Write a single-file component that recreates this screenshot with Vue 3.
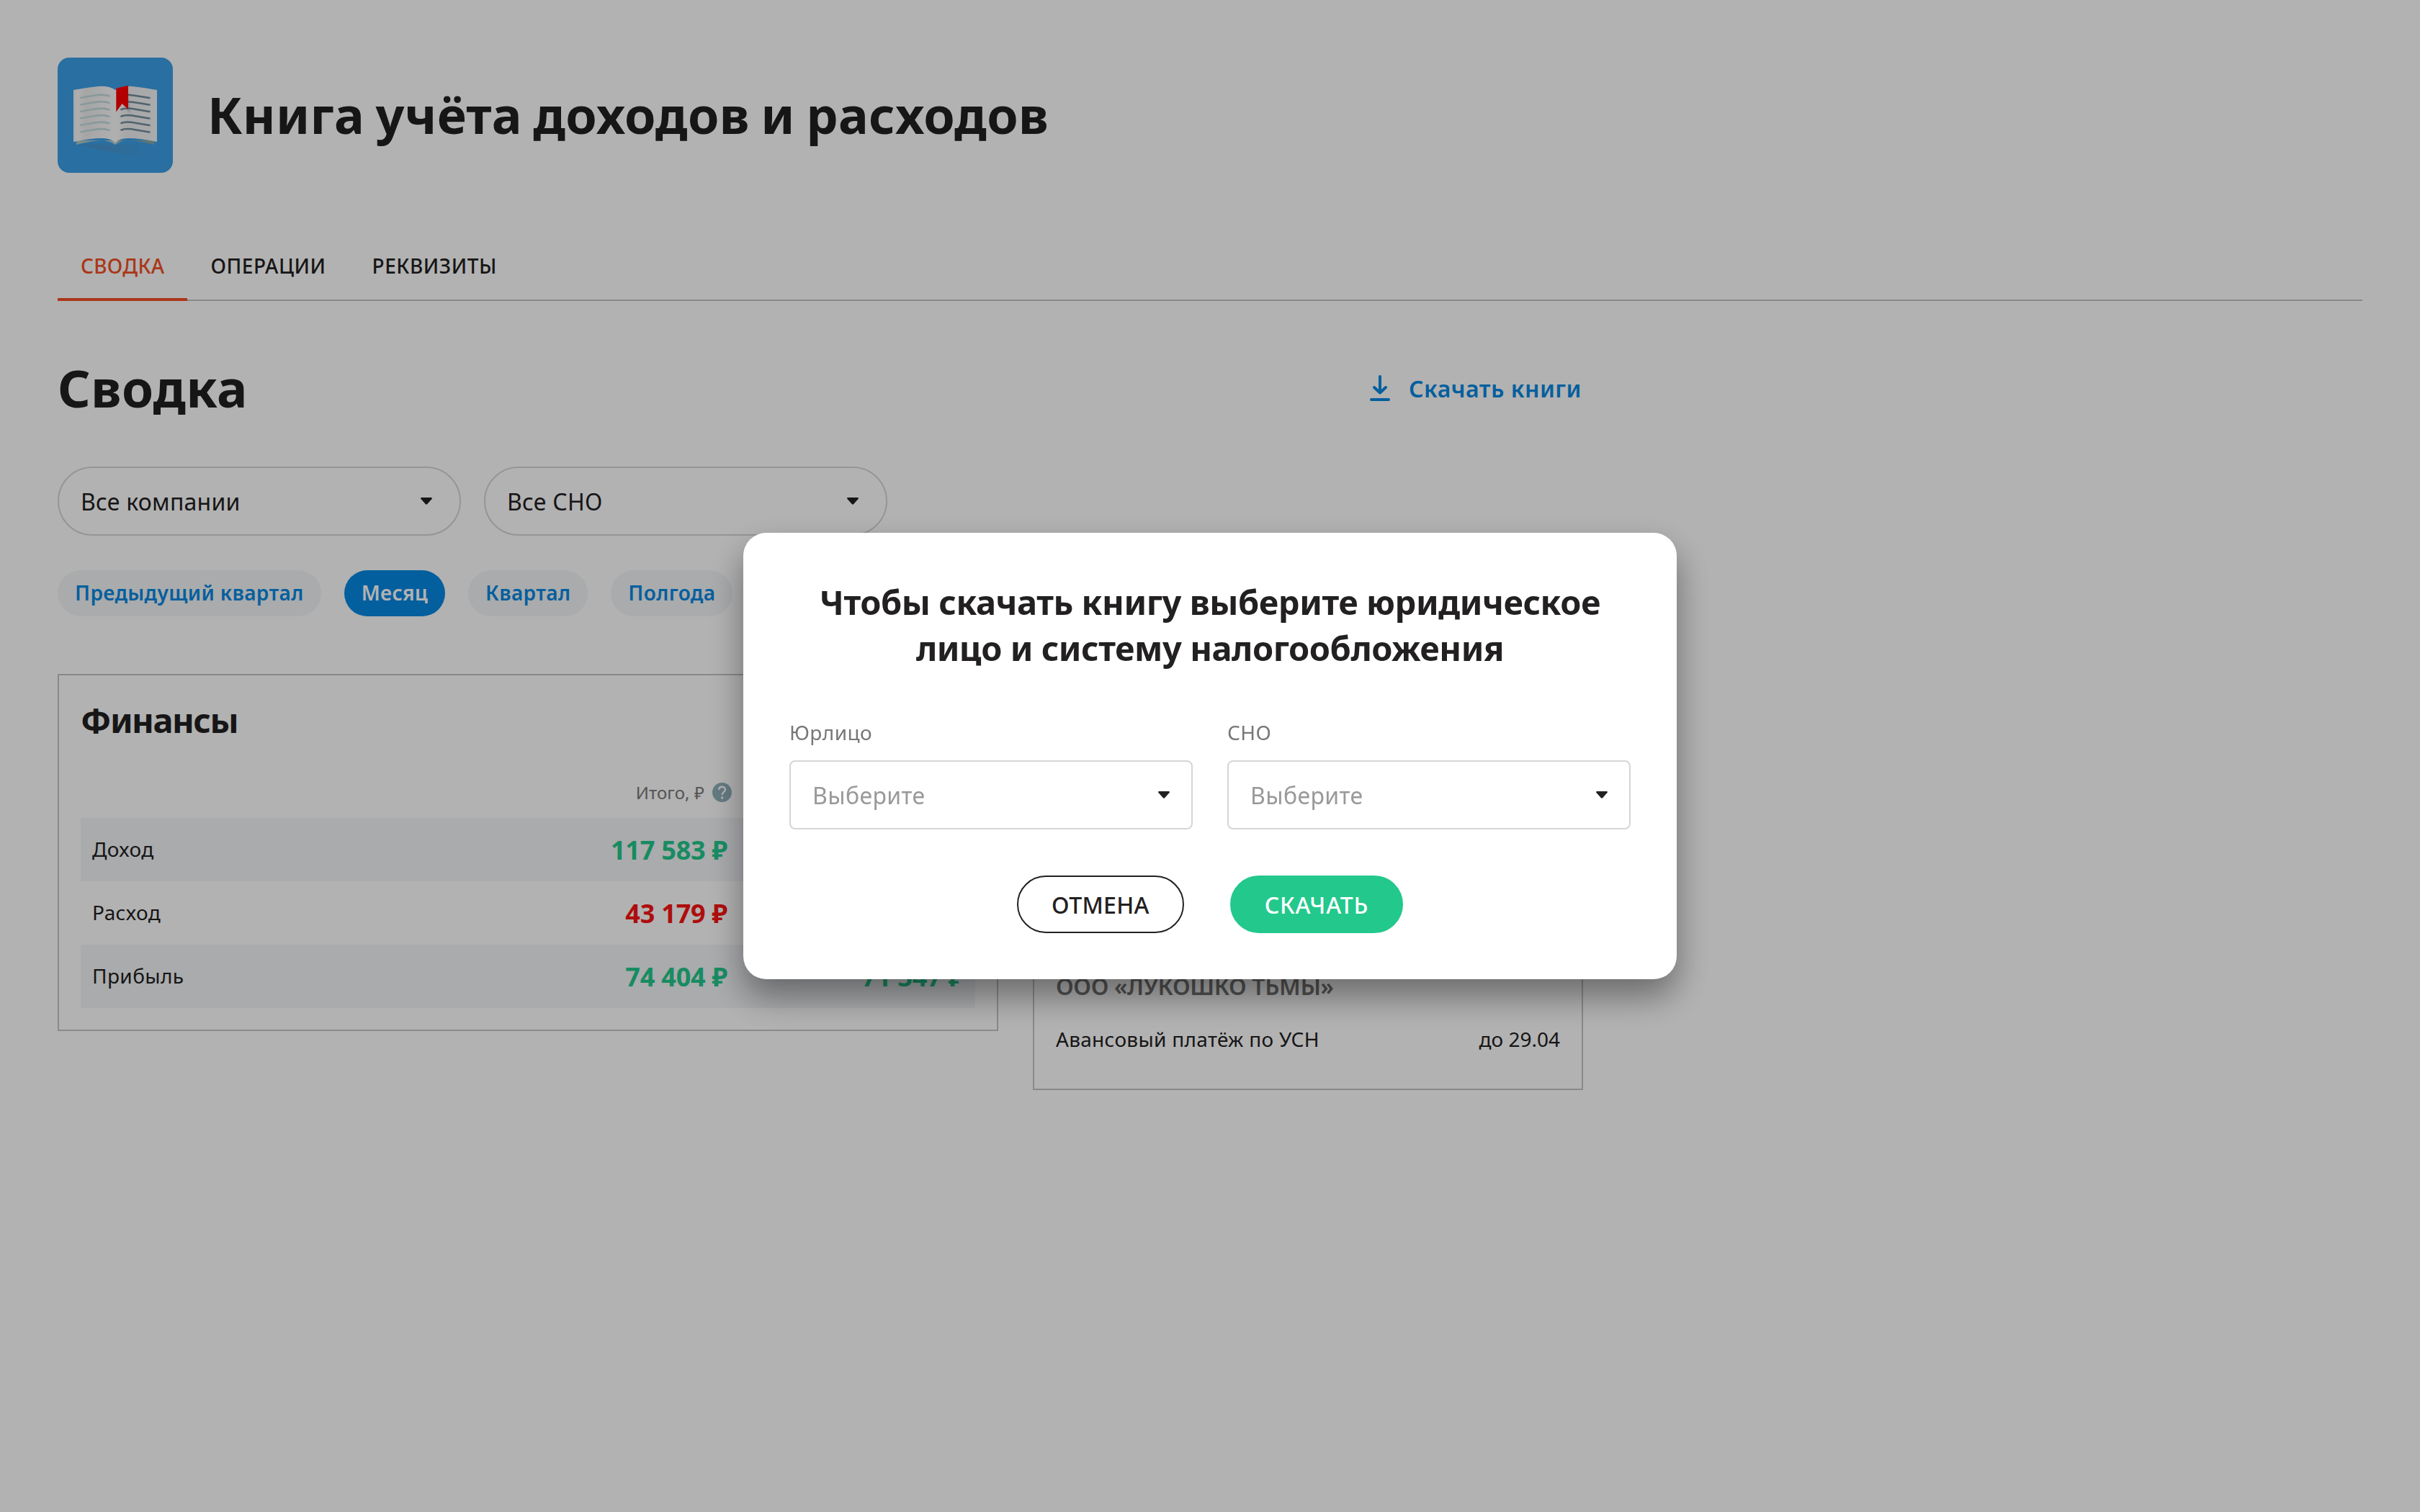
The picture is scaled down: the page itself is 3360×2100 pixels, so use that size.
<template>
  <div class="page">
    <header class="head">
      <svg class="logo" viewBox="0 0 160 160">
        <defs>
          <linearGradient id="shade" x1="0" y1="0" x2="1" y2="0">
            <stop offset="0" stop-color="#4e93c9" />
            <stop offset="1" stop-color="#3ca0e8" />
          </linearGradient>
          <linearGradient id="pageLeft" x1="0" y1="0" x2="1" y2="0">
            <stop offset="0" stop-color="#f1f1f1" />
            <stop offset="0.1" stop-color="#fafafa" />
            <stop offset="0.3" stop-color="#ededed" />
            <stop offset="1" stop-color="#fcfcfc" />
          </linearGradient>
          <linearGradient id="pageRight" x1="0" y1="0" x2="1" y2="0">
            <stop offset="0" stop-color="#fcfcfc" />
            <stop offset="0.3" stop-color="#eeeff1" />
            <stop offset="1" stop-color="#f4f5f6" />
          </linearGradient>
          <linearGradient id="base" x1="0" y1="0" x2="1" y2="0">
            <stop offset="0" stop-color="#a9c8c6" />
            <stop offset="0.5" stop-color="#b9cfce" />
            <stop offset="0.6" stop-color="#8aa9ab" />
            <stop offset="1" stop-color="#86a7a9" />
          </linearGradient>
        </defs>
        <rect width="160" height="160" rx="16" fill="#3ca0e8" />
        <path d="M28 121 L134 121 L124 138 Q112 138 100 136 Z" fill="url(#shade)" />
        <path d="M26 115 H134 V121 Q112 115 97 115 Q87 116 80 121 Q73 116 63 115 Q48 115 26 121 Z" fill="url(#base)" />
        <path d="M22 45 Q38 42 50 40.7 Q70 37.5 80 45 V118.500 Q75 112 62 112 Q50 111.500 22 117 Z" fill="url(#pageLeft)" />
        <path d="M138 45 Q122 42 110 40.700 Q90 37.500 80 45 V118.500 Q85 112 98 112 Q110 111.500 138 117 Z" fill="url(#pageRight)" />
        <path d="M98 47 L101.800 77.500 L95 73.500 L98 71 Z" fill="#d3dadd" />
        <g fill="none" stroke-width="2.600" stroke-linecap="round">
          <path v-for="n in 6" :key="'l' + n" :d="leftLine(n - 1)" stroke="#c4dcdd" />
          <path v-for="n in 6" :key="'r' + n" :d="rightLine(n - 1)" stroke="#728f9d" />
        </g>
        <path d="M81.300 43 Q88 40.500 98 39 V72 L89.500 64 L81.300 75.500 Z" fill="#ff0000" />
      </svg>
      <h1>Книга учёта доходов и расходов</h1>
    </header>

    <nav class="tabs">
      <a v-for="tab in tabs" :key="tab" :class="['tab', { active: tab === activeTab }]">{{ tab }}</a>
    </nav>

    <main class="content">
      <div class="title-row">
        <h2>Сводка</h2>
        <a class="download">
          <svg width="28" height="36" viewBox="0 0 28 36" fill="none" stroke="#0788e3" stroke-width="4" stroke-linecap="round" stroke-linejoin="round">
            <path d="M14 2V24M6 17L14 24.500L22 17M2 34H26" />
          </svg>
          <span>Скачать книги</span>
        </a>
      </div>

      <div class="filters">
        <div v-for="item in filters" :key="item" class="select round">
          <span>{{ item }}</span>
          <svg class="arrow" viewBox="0 0 16 10"><path d="M1.500 0H14.500Q17 .4 15.300 2.300L9.300 9Q8 10.300 6.700 9L.7 2.300Q-1 .4 1.500 0Z" /></svg>
        </div>
      </div>

      <div class="chips">
        <span v-for="p in periods" :key="p" :class="['chip', { selected: p === activePeriod }]">{{ p }}</span>
      </div>

      <div class="cards">
        <section class="card finance">
          <h3>Финансы</h3>
          <div class="row row-head">
            <span></span>
            <span class="total">
              Итого, ₽
              <svg width="27" height="27" viewBox="0 0 27 27">
                <circle cx="13.500" cy="13.500" r="13.500" fill="#90b0ba" />
                <path d="M9.200 10Q9.400 5.700 13.600 5.700Q17.900 5.900 17.900 9.600Q17.900 11.500 15.800 13.100Q13.600 14.700 13.600 17.200" fill="none" stroke="#fff" stroke-width="2.400" />
                <circle cx="13.600" cy="21" r="1.700" fill="#fff" />
              </svg>
            </span>
          </div>
          <div v-for="row in rows" :key="row.name" class="row">
            <span class="name">{{ row.name }}</span>
            <span :class="['sum', row.kind]">{{ row.total }}</span>
            <span :class="['sum', row.kind]">{{ row.extra }}</span>
          </div>
        </section>

        <section class="card payments">
          <div class="company">ООО «ЛУКОШКО ТЬМЫ»</div>
          <div class="payment">
            <span>Авансовый платёж по УСН</span>
            <span class="date">до 29.04</span>
          </div>
        </section>
      </div>
    </main>

    <div class="overlay">
      <div class="modal">
        <h4>Чтобы скачать книгу выберите юридическое<br />лицо и систему налогообложения</h4>
        <div class="fields">
          <div v-for="label in fields" :key="label" class="field">
            <label>{{ label }}</label>
            <div class="select">
              <span class="placeholder">Выберите</span>
              <svg class="arrow" viewBox="0 0 16 10"><path d="M1.500 0H14.500Q17 .4 15.300 2.300L9.300 9Q8 10.300 6.700 9L.7 2.300Q-1 .4 1.500 0Z" /></svg>
            </div>
          </div>
        </div>
        <div class="actions">
          <button class="btn cancel">ОТМЕНА</button>
          <button class="btn submit">СКАЧАТЬ</button>
        </div>
      </div>
    </div>
  </div>
</template>

<script setup>
import { ref } from 'vue'

const tabs = ['СВОДКА', 'ОПЕРАЦИИ', 'РЕКВИЗИТЫ']
const activeTab = ref('СВОДКА')

const filters = ['Все компании', 'Все СНО']
const periods = ['Предыдущий квартал', 'Месяц', 'Квартал', 'Полгода']
const activePeriod = ref('Месяц')

const rows = [
  { name: 'Доход', total: '117 583 ₽', kind: 'plus' },
  { name: 'Расход', total: '43 179 ₽', kind: 'minus' },
  { name: 'Прибыль', total: '74 404 ₽', extra: '71 347 ₽', kind: 'plus' },
]

const fields = ['Юрлицо', 'СНО']

// lines of text on the pages of the book
function leftLine(i) {
  const y = 55.7 + i * 9.5
  return `M32.300 ${y}Q42 ${y - 1.7} 52 ${y - 3.3}Q64 ${y - 5.2} 71.500 ${y - 2.5}`
}

function rightLine(i) {
  const y = 52.5 + i * 9.5
  // the first two are partly covered by the bookmark
  if (i < 2) {
    return `M98 ${y - 0.8}Q106 ${y} 112 ${y + 1}L127.500 ${y + 3.5}`
  }
  return `M88.500 ${y + 0.5}Q95 ${y - 2.2} 108 ${y + 0.2}L127.500 ${y + 3.5}`
}
</script>

<style>
body {
  background: #fff;
}
</style>

<style scoped>
.page {
  box-sizing: border-box;
  height: 2100px;
  padding: 80px;
  overflow: hidden;
  font-family: "Noto Sans", "Open Sans", sans-serif;
  letter-spacing: 0.4px;
  color: #222021;
}

h1, h2, h3, h4 {
  margin: 0;
  font-weight: 700;
}

.head {
  display: flex;
  align-items: center;
  gap: 48px;
  height: 160px;
}

.logo {
  width: 160px;
  height: 160px;
}

h1 {
  padding-bottom: 2px;
  font-size: 70px;
  line-height: 96px;
  letter-spacing: 0.3px;
  word-spacing: -3px;
}

.tabs {
  display: flex;
  margin-top: 80px;
  border-bottom: 2px solid #c5c5c5;
}

.tab {
  margin-bottom: -2px;
  padding: 29px 32px 25px;
  border-bottom: 4px solid transparent;
  font-size: 28px;
  font-weight: 500;
  line-height: 40px;
  letter-spacing: 0.55px;
}

.tab.active {
  letter-spacing: 0.3px;
  color: #f44f24;
  border-color: #f44f24;
}

.content {
  width: 2118px;
}

.title-row {
  display: flex;
  justify-content: space-between;
  align-items: center;
  height: 98px;
  margin-top: 72px;
}

h2 {
  font-size: 71px;
  line-height: 98px;
  letter-spacing: 0.4px;
}

.download {
  display: flex;
  align-items: center;
  gap: 26px;
  padding-right: 2px;
  font-size: 32px;
  font-weight: 600;
  letter-spacing: 0.5px;
  color: #0788e3;
}

.filters {
  display: flex;
  gap: 32px;
  margin-top: 60px;
}

.select {
  box-sizing: border-box;
  display: flex;
  justify-content: space-between;
  align-items: center;
  width: 560px;
  height: 96px;
  padding: 0 30px;
  border: 2px solid #d6d6d6;
  border-radius: 8px;
  font-size: 32px;
}

.select.round {
  padding-right: 38px;
  border-radius: 48px;
  letter-spacing: 0.25px;
}

.arrow {
  width: 16px;
  height: 10px;
  fill: #222021;
}

.placeholder {
  color: #999;
}

.chips {
  display: flex;
  gap: 32px;
  margin-top: 48px;
}

.chip {
  padding: 0 24px 2px;
  border-radius: 32px;
  background: #f3f5f7;
  font-size: 28px;
  font-weight: 600;
  line-height: 62px;
  letter-spacing: 0.38px;
  color: #0788e3;
}

.chip.selected {
  background: #0788e3;
  color: #fff;
}

.cards {
  display: flex;
  align-items: flex-start;
  gap: 48px;
  margin-top: 80px;
}

.card {
  box-sizing: border-box;
  padding: 30px;
  border: 2px solid #c5c5c5;
}

.finance {
  width: 1306px;
}

h3 {
  margin-bottom: 32px;
  font-size: 47px;
  line-height: 64px;
  letter-spacing: -1.5px;
}

.row {
  display: grid;
  grid-template-columns: 1fr 400px 328px;
  align-items: center;
  height: 88px;
}

.row:nth-child(odd) {
  background: #f3f5f7;
}

.row.row-head {
  height: 72px;
  background: none;
}

.total {
  display: flex;
  justify-content: flex-end;
  align-items: center;
  gap: 11px;
  padding-right: 10px;
  font-size: 24px;
  letter-spacing: 0.1px;
  color: #777;
}

.name {
  padding: 0 0 2px 16px;
  font-size: 28px;
}

.sum {
  padding-right: 16px;
  text-align: right;
  font-size: 36px;
  font-weight: 700;
  letter-spacing: -0.2px;
}

.plus {
  color: #23c88c;
}

.minus {
  color: #f91414;
}

.payments {
  display: flex;
  flex-direction: column;
  justify-content: flex-end;
  width: 764px;
  height: 578px;
  padding-bottom: 49px;
}

.company {
  font-size: 32px;
  font-weight: 600;
  line-height: 44px;
  letter-spacing: -0.35px;
  color: #777;
}

.payment {
  display: flex;
  justify-content: space-between;
  margin-top: 31px;
  font-size: 28px;
  line-height: 40px;
  letter-spacing: 0.3px;
}

.date {
  letter-spacing: 0;
}

.overlay {
  position: fixed;
  inset: 0;
  display: flex;
  justify-content: center;
  align-items: center;
  background: rgba(0, 0, 0, 0.3);
}

.modal {
  box-sizing: border-box;
  width: 1296px;
  padding: 64px;
  border-radius: 32px;
  background: #fff;
  box-shadow: 0 24px 48px rgba(0, 0, 0, 0.4);
}

h4 {
  text-align: center;
  font-size: 47px;
  line-height: 64px;
  letter-spacing: -0.45px;
}

.fields {
  display: flex;
  gap: 48px;
  margin-top: 65px;
}

.field label {
  display: block;
  margin-bottom: 19px;
  font-size: 28px;
  line-height: 40px;
  color: #777;
}

.actions {
  display: flex;
  justify-content: center;
  gap: 64px;
  margin-top: 64px;
}

.btn {
  box-sizing: border-box;
  height: 80px;
  padding: 0 46px;
  border: 2px solid #222021;
  border-radius: 40px;
  background: #fff;
  font: inherit;
  font-size: 32px;
  font-weight: 500;
  letter-spacing: 0.3px;
  color: #222021;
}

.btn.submit {
  border-color: #23c88c;
  background: #23c88c;
  letter-spacing: 0.8px;
  color: #fff;
}
</style>
